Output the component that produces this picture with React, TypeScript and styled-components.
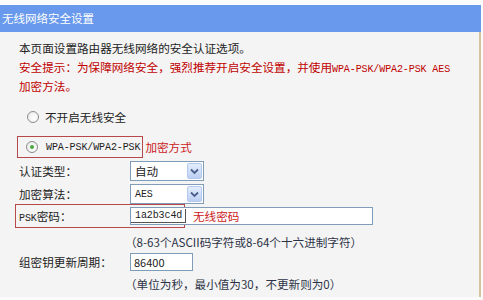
import React from "react";
import styled, { createGlobalStyle, css } from "styled-components";

const GlobalStyle = createGlobalStyle`
  html, body { margin: 0; padding: 0; background: #fbfbfb; }
  body { font-family: "Noto Sans CJK SC", "Noto Sans", sans-serif; }
`;

const Page = styled.div`
  width: 483px;
  height: 300px;
  overflow: hidden;
  padding-top: 5px;
  box-sizing: border-box;
  background: #fbfbfb;
`;

const Header = styled.div`
  width: 481px;
  height: 27px;
  background: #6899ec;
  color: #fff;
  font-size: 11.5px;
  line-height: 27px;
  padding-left: 2px;
  box-sizing: border-box;
`;

const Body = styled.div`
  width: 481px;
  height: 265px;
  background: #f4f4f4;
  border-right: 2px solid #d3c39f;
  box-sizing: border-box;
  padding: 7px 0 0 19px;
  font-size: 11.6px;
  color: #222;
  display: flex;
  flex-direction: column;
  position: relative;
`;

const Line = styled.div<{ $red?: boolean }>`
  height: 19px;
  line-height: 19px;
  white-space: nowrap;
  color: ${(p) => (p.$red ? "#c00000" : "#222")};
`;

const Mono = styled.span<{ $size?: number }>`
  font-family: "Liberation Mono", "Courier New", monospace;
  font-size: ${(p) => p.$size ?? 10}px;
  letter-spacing: -0.1px;
`;

const RadioRow = styled.div<{ $top: number }>`
  margin-top: ${(p) => p.$top}px;
  height: 20px;
  display: flex;
  align-items: center;
`;

const Annot = styled.div`
  display: flex;
  align-items: center;
  height: 20px;
  margin-left: -2px;
  padding: 0 2px 0 8px;
  border: 1px solid #b8474a;
  gap: 8px;
`;

const Radio = styled.span<{ $checked?: boolean }>`
  position: relative;
  flex: none;
  width: 12px;
  height: 12px;
  border-radius: 50%;
  border: 1px solid #8d8d8d;
  box-sizing: border-box;
  background: radial-gradient(circle at 60% 60%, #ffffff 0, #e6e6e6 100%);
  ${(p) =>
    p.$checked &&
    css`
      &::after {
        content: "";
        position: absolute;
        left: 3px;
        top: 3px;
        width: 4px;
        height: 4px;
        border-radius: 50%;
        background: #49a83e;
      }
    `}
`;

const RadioLabel = styled.span`
  margin-left: 6px;
`;

const RedNote = styled.span`
  color: #cc2020;
  margin-left: 2px;
`;

const FieldRow = styled.div<{ $top: number; $h?: number }>`
  margin-top: ${(p) => p.$top}px;
  height: ${(p) => p.$h ?? 20}px;
  display: grid;
  grid-template-columns: 111px auto;
  align-items: center;
  white-space: nowrap;
`;

const SelectBox = styled.div`
  width: 74px;
  height: 20px;
  box-sizing: border-box;
  border: 1px solid #7f9db9;
  background: #fff;
  display: flex;
  align-items: center;
  justify-content: space-between;
  padding: 1px 1px 1px 4px;
`;

const DropBtn = styled.span`
  width: 15px;
  height: 16px;
  box-sizing: border-box;
  border: 1px solid #b5c9ec;
  border-radius: 2px;
  background: linear-gradient(#e3edfd, #bccff3);
  display: flex;
  align-items: center;
  justify-content: center;
`;

const TextInput = styled.div<{ $w: number }>`
  width: ${(p) => p.$w}px;
  height: 18px;
  box-sizing: border-box;
  border: 1px solid #7f9db9;
  background: #fff;
  display: flex;
  align-items: center;
  padding-left: 3px;
  font-size: 11px;
  position: relative;
`;

const ValueMark = styled.span`
  display: flex;
  align-items: center;
  height: 13px;
  margin-left: -3px;
  padding: 0 3px 0 4px;
  border-right: 1px solid #555;
  border-bottom: 1px solid #555;
`;

const PskNote = styled.span`
  position: absolute;
  left: 62px;
  top: 1px;
  color: #cc2020;
  font-size: 11.6px;
  line-height: 15px;
`;

const PskFrame = styled.div`
  position: absolute;
  left: -4px;
  top: 0;
  width: 170px;
  height: 24px;
  box-sizing: border-box;
  border: 1px solid #b8474a;
  pointer-events: none;
`;

const PskWrap = styled.div`
  position: relative;
`;

const Hint = styled.div<{ $top: number }>`
  margin-top: ${(p) => p.$top}px;
  margin-left: 106px;
  height: 19px;
  line-height: 19px;
  color: #2d3347;
  white-space: nowrap;
`;

const Chevron = () => (
  <svg width="9" height="7" viewBox="0 0 9 7">
    <path d="M1 1.5 L4.5 5 L8 1.5" fill="none" stroke="#4a5f8c" strokeWidth="1.8" />
  </svg>
);

const Select = ({ value, mono }: { value: string; mono?: boolean }) => (
  <SelectBox>
    {mono ? <Mono $size={10}>{value}</Mono> : <span>{value}</span>}
    <DropBtn>
      <Chevron />
    </DropBtn>
  </SelectBox>
);

export default function App() {
  return (
    <>
      <GlobalStyle />
      <Page>
        <Header>无线网络安全设置</Header>
        <Body>
          <Line>本页面设置路由器无线网络的安全认证选项。</Line>
          <Line $red>
            安全提示：为保障网络安全，强烈推荐开启安全设置，并使用
            <Mono>WPA-PSK/WPA2-PSK AES</Mono>
          </Line>
          <Line $red>加密方法。</Line>

          <RadioRow $top={11} style={{ paddingLeft: 8 }}>
            <Radio />
            <RadioLabel>不开启无线安全</RadioLabel>
          </RadioRow>

          <RadioRow $top={10}>
            <Annot>
              <Radio $checked />
              <Mono>WPA-PSK/WPA2-PSK</Mono>
            </Annot>
            <RedNote>加密方式</RedNote>
          </RadioRow>

          <FieldRow $top={4}>
            <span>认证类型：</span>
            <Select value="自动" />
          </FieldRow>
          <FieldRow $top={3}>
            <span>加密算法：</span>
            <Select value="AES" mono />
          </FieldRow>

          <PskWrap>
            <PskFrame />
            <FieldRow $top={0} $h={24}>
              <span>
                <Mono>PSK</Mono>密码：
              </span>
              <TextInput $w={243}>
                <ValueMark>
                  <Mono>1a2b3c4d</Mono>
                </ValueMark>
                <PskNote>无线密码</PskNote>
              </TextInput>
            </FieldRow>
          </PskWrap>

          <Hint $top={5}>（8-63个ASCII码字符或8-64个十六进制字符）</Hint>

          <FieldRow $top={0} $h={19}>
            <span>组密钥更新周期：</span>
            <TextInput $w={63}>86400</TextInput>
          </FieldRow>

          <Hint $top={4}>（单位为秒，最小值为30，不更新则为0）</Hint>
        </Body>
      </Page>
    </>
  );
}
